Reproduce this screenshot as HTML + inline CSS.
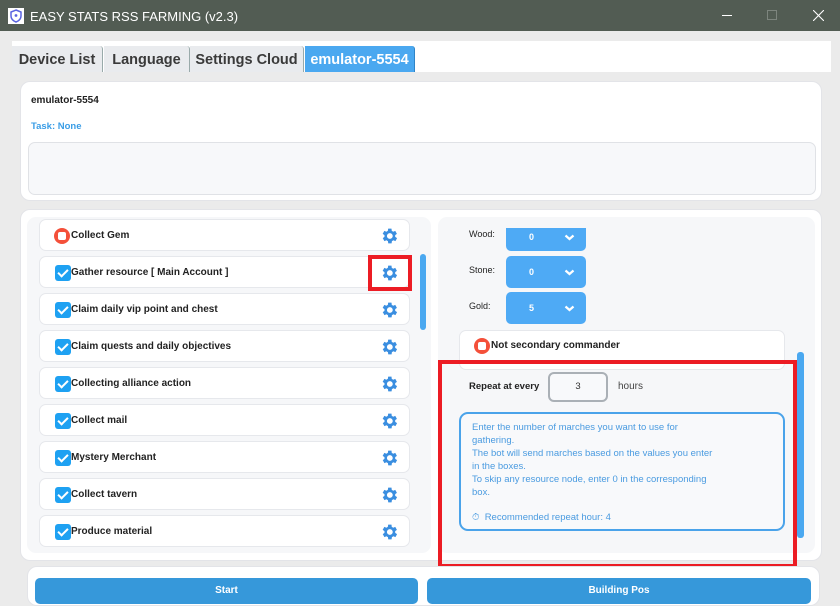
<!DOCTYPE html>
<html><head><meta charset="utf-8"><style>
*{margin:0;padding:0;box-sizing:border-box}
body{width:840px;height:600px;overflow:hidden;background:#ebebeb;font-family:"Liberation Sans",Arial,sans-serif;position:relative}
.abs{position:absolute}
.title{left:0;top:0;width:840px;height:31px;background:#525c53;color:#fff;font-size:13px}
.tabbar{left:12px;top:41px;width:819px;height:31px;background:#fff}
.tab{position:absolute;top:5px;height:26px;background:#e9ebee;color:#3a3a3a;font-weight:bold;font-size:14.5px;line-height:28px;text-align:center;border-right:1px solid #9aa;border-top-right-radius:3px}
.card{background:#fff;border-radius:10px;border:1px solid #e3e4e8}
.row{position:absolute;left:12px;width:371px;height:32px;background:#fff;border:1px solid #e6e8ec;border-radius:7px;font-size:10px;font-weight:bold;color:#222;line-height:32px;padding-left:31px}
.cb{position:absolute;left:15px;top:8px;width:16px;height:16px;background:#1ea1f2;border-radius:3px}
.cb:after{content:"";position:absolute;left:5px;top:2px;width:4px;height:8px;border:solid #fff;border-width:0 2px 2px 0;transform:rotate(45deg)}
.rd{position:absolute;left:14px;top:8px;width:16px;height:16px;border-radius:50%;background:#f4503a}
.rd:after{content:"";position:absolute;left:4px;top:4px;width:8px;height:8px;border-radius:2px;background:#fff}
.gear{position:absolute;right:10px;top:6px}
.sel{position:absolute;left:506px;width:80px;height:32px;background:#4eaaf5;border-radius:5px;color:#fff;font-size:9px;font-weight:bold}
.sel svg{position:absolute;left:58px}
.lbl{position:absolute;left:469px;font-size:9px;color:#222}
.btn{position:absolute;top:578px;height:26px;background:#3698da;color:#fff;font-size:10px;font-weight:bold;text-align:center;line-height:26px;border-radius:5px}
</style></head><body>
<div class="abs title">
<svg class="abs" style="left:8px;top:8px" width="16" height="16" viewBox="0 0 16 16"><rect width="16" height="16" fill="#fff"/><path d="M8 2 L13 4 V8 C13 11 10.5 13 8 14 C5.5 13 3 11 3 8 V4 Z" fill="none" stroke="#5a63e0" stroke-width="1.5"/><circle cx="8" cy="7.5" r="1.4" fill="#5a63e0"/></svg>
<span class="abs" style="left:30px;top:9px">EASY STATS RSS FARMING (v2.3)</span>
<div class="abs" style="left:722px;top:15px;width:10px;height:1px;background:#fff"></div>
<div class="abs" style="left:767px;top:10px;width:10px;height:10px;border:1px solid #7d857e"></div>
<svg class="abs" style="left:813px;top:10px" width="11" height="11"><path d="M0 0L11 11M11 0L0 11" stroke="#fff" stroke-width="1.1"/></svg>
</div>
<div class="abs tabbar">
<div class="tab" style="left:0;width:91px">Device List</div>
<div class="tab" style="left:92px;width:86px">Language</div>
<div class="tab" style="left:178px;width:114px">Settings Cloud</div>
<div class="tab" style="left:293px;width:110px;background:#4aa8f0;color:#fff;border-right:1px solid #2f84c7">emulator-5554</div>
</div>
<div class="abs card" style="left:20px;top:81px;width:802px;height:120px">
<div class="abs" style="left:10px;top:13px;font-size:10px;font-weight:bold;color:#222">emulator-5554</div>
<div class="abs" style="left:10px;top:39px;font-size:9.5px;font-weight:bold;color:#3a9de6">Task: None</div>
<div class="abs" style="left:7px;top:60px;width:788px;height:53px;background:#f7f8fa;border:1px solid #e0e2e6;border-radius:7px"></div>
</div>
<div class="abs card" style="left:20px;top:209px;width:802px;height:352px"></div>
<div class="abs" style="left:27px;top:217px;width:404px;height:336px;background:#f6f7f9;border-radius:9px;overflow:hidden">
<div class="row" style="top:2px"><div class="rd"></div>Collect Gem<svg class="gear" width="20" height="20" viewBox="0 0 24 24"><path fill="#3a8ee0" d="M19.4 13a7.5 7.5 0 000-2l2.1-1.6-2-3.5-2.5 1a7 7 0 00-1.7-1L15 3.2h-4l-.4 2.7a7 7 0 00-1.7 1l-2.5-1-2 3.5L6.6 11a7.5 7.5 0 000 2l-2.1 1.6 2 3.5 2.5-1a7 7 0 001.7 1l.4 2.7h4l.4-2.7a7 7 0 001.7-1l2.5 1 2-3.5zM13 15.5a3.5 3.5 0 110-7 3.5 3.5 0 010 7z"/></svg></div>
<div class="row" style="top:39px"><div class="cb"></div>Gather resource [ Main Account ]<svg class="gear" width="20" height="20" viewBox="0 0 24 24"><path fill="#3a8ee0" d="M19.4 13a7.5 7.5 0 000-2l2.1-1.6-2-3.5-2.5 1a7 7 0 00-1.7-1L15 3.2h-4l-.4 2.7a7 7 0 00-1.7 1l-2.5-1-2 3.5L6.6 11a7.5 7.5 0 000 2l-2.1 1.6 2 3.5 2.5-1a7 7 0 001.7 1l.4 2.7h4l.4-2.7a7 7 0 001.7-1l2.5 1 2-3.5zM13 15.5a3.5 3.5 0 110-7 3.5 3.5 0 010 7z"/></svg></div>
<div class="row" style="top:76px"><div class="cb"></div>Claim daily vip point and chest<svg class="gear" width="20" height="20" viewBox="0 0 24 24"><path fill="#3a8ee0" d="M19.4 13a7.5 7.5 0 000-2l2.1-1.6-2-3.5-2.5 1a7 7 0 00-1.7-1L15 3.2h-4l-.4 2.7a7 7 0 00-1.7 1l-2.5-1-2 3.5L6.6 11a7.5 7.5 0 000 2l-2.1 1.6 2 3.5 2.5-1a7 7 0 001.7 1l.4 2.7h4l.4-2.7a7 7 0 001.7-1l2.5 1 2-3.5zM13 15.5a3.5 3.5 0 110-7 3.5 3.5 0 010 7z"/></svg></div>
<div class="row" style="top:113px"><div class="cb"></div>Claim quests and daily objectives<svg class="gear" width="20" height="20" viewBox="0 0 24 24"><path fill="#3a8ee0" d="M19.4 13a7.5 7.5 0 000-2l2.1-1.6-2-3.5-2.5 1a7 7 0 00-1.7-1L15 3.2h-4l-.4 2.7a7 7 0 00-1.7 1l-2.5-1-2 3.5L6.6 11a7.5 7.5 0 000 2l-2.1 1.6 2 3.5 2.5-1a7 7 0 001.7 1l.4 2.7h4l.4-2.7a7 7 0 001.7-1l2.5 1 2-3.5zM13 15.5a3.5 3.5 0 110-7 3.5 3.5 0 010 7z"/></svg></div>
<div class="row" style="top:150px"><div class="cb"></div>Collecting alliance action<svg class="gear" width="20" height="20" viewBox="0 0 24 24"><path fill="#3a8ee0" d="M19.4 13a7.5 7.5 0 000-2l2.1-1.6-2-3.5-2.5 1a7 7 0 00-1.7-1L15 3.2h-4l-.4 2.7a7 7 0 00-1.7 1l-2.5-1-2 3.5L6.6 11a7.5 7.5 0 000 2l-2.1 1.6 2 3.5 2.5-1a7 7 0 001.7 1l.4 2.7h4l.4-2.7a7 7 0 001.7-1l2.5 1 2-3.5zM13 15.5a3.5 3.5 0 110-7 3.5 3.5 0 010 7z"/></svg></div>
<div class="row" style="top:187px"><div class="cb"></div>Collect mail<svg class="gear" width="20" height="20" viewBox="0 0 24 24"><path fill="#3a8ee0" d="M19.4 13a7.5 7.5 0 000-2l2.1-1.6-2-3.5-2.5 1a7 7 0 00-1.7-1L15 3.2h-4l-.4 2.7a7 7 0 00-1.7 1l-2.5-1-2 3.5L6.6 11a7.5 7.5 0 000 2l-2.1 1.6 2 3.5 2.5-1a7 7 0 001.7 1l.4 2.7h4l.4-2.7a7 7 0 001.7-1l2.5 1 2-3.5zM13 15.5a3.5 3.5 0 110-7 3.5 3.5 0 010 7z"/></svg></div>
<div class="row" style="top:224px"><div class="cb"></div>Mystery Merchant<svg class="gear" width="20" height="20" viewBox="0 0 24 24"><path fill="#3a8ee0" d="M19.4 13a7.5 7.5 0 000-2l2.1-1.6-2-3.5-2.5 1a7 7 0 00-1.7-1L15 3.2h-4l-.4 2.7a7 7 0 00-1.7 1l-2.5-1-2 3.5L6.6 11a7.5 7.5 0 000 2l-2.1 1.6 2 3.5 2.5-1a7 7 0 001.7 1l.4 2.7h4l.4-2.7a7 7 0 001.7-1l2.5 1 2-3.5zM13 15.5a3.5 3.5 0 110-7 3.5 3.5 0 010 7z"/></svg></div>
<div class="row" style="top:261px"><div class="cb"></div>Collect tavern<svg class="gear" width="20" height="20" viewBox="0 0 24 24"><path fill="#3a8ee0" d="M19.4 13a7.5 7.5 0 000-2l2.1-1.6-2-3.5-2.5 1a7 7 0 00-1.7-1L15 3.2h-4l-.4 2.7a7 7 0 00-1.7 1l-2.5-1-2 3.5L6.6 11a7.5 7.5 0 000 2l-2.1 1.6 2 3.5 2.5-1a7 7 0 001.7 1l.4 2.7h4l.4-2.7a7 7 0 001.7-1l2.5 1 2-3.5zM13 15.5a3.5 3.5 0 110-7 3.5 3.5 0 010 7z"/></svg></div>
<div class="row" style="top:298px"><div class="cb"></div>Produce material<svg class="gear" width="20" height="20" viewBox="0 0 24 24"><path fill="#3a8ee0" d="M19.4 13a7.5 7.5 0 000-2l2.1-1.6-2-3.5-2.5 1a7 7 0 00-1.7-1L15 3.2h-4l-.4 2.7a7 7 0 00-1.7 1l-2.5-1-2 3.5L6.6 11a7.5 7.5 0 000 2l-2.1 1.6 2 3.5 2.5-1a7 7 0 001.7 1l.4 2.7h4l.4-2.7a7 7 0 001.7-1l2.5 1 2-3.5zM13 15.5a3.5 3.5 0 110-7 3.5 3.5 0 010 7z"/></svg></div>
<div class="abs" style="left:393px;top:37px;width:6px;height:76px;background:#4aa8f0;border-radius:3px"></div>
</div>
<div class="abs" style="left:368px;top:255px;width:44px;height:36px;border:4px solid #ec1c24"></div>
<div class="abs" style="left:438px;top:217px;width:377px;height:336px;background:#f6f7f9;border-radius:9px;overflow:hidden">
<div class="abs" style="left:21px;top:113px;width:326px;height:40px;background:#fff;border:1px solid #e6e8ec;border-radius:7px"></div>
</div>
<div class="lbl" style="top:229px">Wood:</div>
<div class="sel" style="top:228px;height:23px;border-radius:0 0 5px 5px"><span class="abs" style="left:23px;top:4px">0</span><svg style="top:6px" width="11" height="7"><path d="M1.5 1.5L5.5 5L9.5 1.5" stroke="#fff" stroke-width="2.2" fill="none"/></svg></div>
<div class="lbl" style="top:265px">Stone:</div>
<div class="sel" style="top:256px"><span class="abs" style="left:23px;top:11px">0</span><svg style="top:13px" width="11" height="7"><path d="M1.5 1.5L5.5 5L9.5 1.5" stroke="#fff" stroke-width="2.2" fill="none"/></svg></div>
<div class="lbl" style="top:301px">Gold:</div>
<div class="sel" style="top:292px"><span class="abs" style="left:23px;top:11px">5</span><svg style="top:13px" width="11" height="7"><path d="M1.5 1.5L5.5 5L9.5 1.5" stroke="#fff" stroke-width="2.2" fill="none"/></svg></div>
<div class="rd" style="left:474px;top:338px"></div>
<div class="abs" style="left:491px;top:340px;font-size:10px;font-weight:bold;color:#222">Not secondary commander</div>
<div class="abs" style="left:797px;top:352px;width:7px;height:186px;background:#4aa8f0;border-radius:3px"></div>
<div class="abs" style="left:438px;top:360px;width:359px;height:208px;border:4px solid #ec1c24"></div>
<div class="abs" style="left:469px;top:381px;font-size:9.5px;font-weight:bold;color:#222">Repeat at every</div>
<div class="abs" style="left:548px;top:372px;width:60px;height:30px;border:2px solid #aab0b6;border-radius:6px;background:#f8f9fb;text-align:center;line-height:26px;font-size:9.5px;color:#333">3</div>
<div class="abs" style="left:618px;top:381px;font-size:10px;color:#444">hours</div>
<div class="abs" style="left:459px;top:412px;width:326px;height:119px;border:2px solid #4aa3ea;border-radius:9px;background:#f8f9fb;color:#4a9be0;font-size:9.5px;line-height:13px;padding:7px 0 0 11px">Enter the number of marches you want to use for<br>gathering.<br>The bot will send marches based on the values you enter<br>in the boxes.<br>To skip any resource node, enter 0 in the corresponding<br>box.<div style="margin-top:12px">&#9201;&nbsp; Recommended repeat hour: 4</div></div>
<div class="abs card" style="left:27px;top:566px;width:793px;height:40px"></div>
<div class="btn" style="left:35px;width:383px">Start</div>
<div class="btn" style="left:427px;width:384px">Building Pos</div>
</body></html>
